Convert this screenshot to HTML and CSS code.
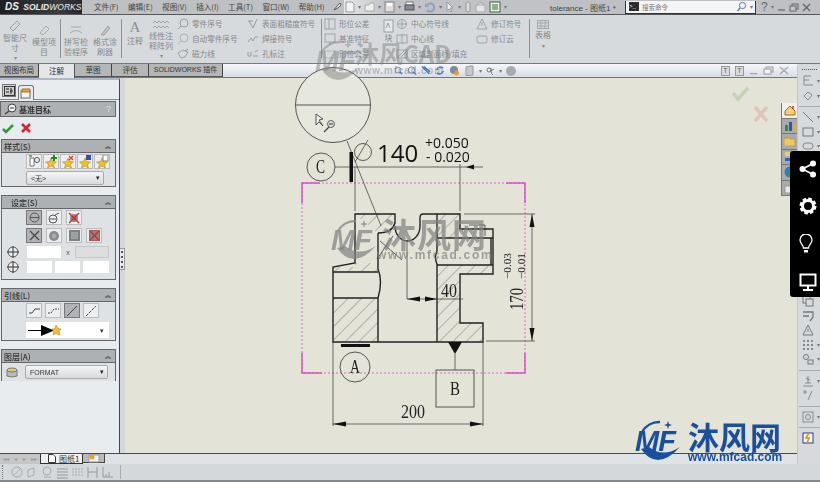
FILE: index.html
```html
<!DOCTYPE html>
<html>
<head>
    <meta charset="utf-8">
    <title>tolerance - 图纸1</title>
    <link rel="stylesheet" href="styles.css">
</head>
<body>
<div class="app">

    <!-- title bar -->
    <div class="topbar">
        <div class="logo"><span class="ds">DS</span> SOLID<span class="thin">WORKS</span></div>
        <div class="menu">
            <span>文件(F)</span><span>编辑(E)</span><span>视图(V)</span><span>插入(I)</span><span>工具(T)</span><span>窗口(W)</span><span>帮助(H)</span>
        </div>
        <svg class="pin" width="10" height="12" viewBox="0 0 10 12"><path d="M2 9 L5 5 L8 2 L9 4 L6 7Z" fill="#eee" stroke="#555"/></svg>
        <div class="quick">
            <svg width="10" height="12" viewBox="0 0 10 12"><path d="M1 1H7L9 3V11H1Z" fill="#f4f4f4" stroke="#999"/></svg><i>▾</i>
            <svg width="11" height="12" viewBox="0 0 11 12"><path d="M1 4H5L6 2H10V10H1Z" fill="#eee" stroke="#aaa"/></svg><i>▾</i>
            <svg width="11" height="12" viewBox="0 0 11 12"><rect x="1" y="1" width="9" height="10" fill="#ddd" stroke="#888"/><rect x="3" y="2" width="5" height="3" fill="#fff"/></svg><i>▾</i>
            <svg width="11" height="12" viewBox="0 0 11 12"><rect x="2" y="1" width="7" height="3" fill="#fff" stroke="#777"/><rect x="1" y="4" width="9" height="5" fill="#889" stroke="#555"/></svg><i>▾</i>
            <svg width="12" height="12" viewBox="0 0 12 12"><path d="M3 4 A4 4 0 1 1 3 9" fill="none" stroke="#8ea1bd" stroke-width="2"/><path d="M1 2V6H5Z" fill="#8ea1bd"/></svg><i>▾</i>
            <svg width="10" height="12" viewBox="0 0 10 12"><path d="M2 1V10L4 8L6 11L7 10L5 7H8Z" fill="#eee" stroke="#999"/></svg><i>▾</i>
            <svg width="8" height="12" viewBox="0 0 8 12"><rect x="2" y="1" width="4" height="10" rx="2" fill="#ddd" stroke="#999"/></svg>
            <svg width="11" height="12" viewBox="0 0 11 12"><path d="M1 4H10V11H1Z M3 4V2H8V4" fill="#e4e4e4" stroke="#aaa"/></svg>
            <svg width="12" height="12" viewBox="0 0 12 12"><rect x="1" y="1" width="10" height="10" fill="#e8f0e8" stroke="#3a6a3a"/><path d="M3 4H9M3 6H9M3 8H9" stroke="#3a6a3a"/></svg><i>▾</i>
        </div>
        <div class="doc-title">tolerance - 图纸1 *</div>
        <div class="search">
            <span class="prompt">&gt;_</span>
            <span class="search-text">搜索命令</span>
            <svg width="11" height="11" viewBox="0 0 11 11"><circle cx="6.5" cy="4.5" r="3.2" fill="#eef" stroke="#6a7f99"/><path d="M4 7L1.5 10" stroke="#6a7f99" stroke-width="1.4"/></svg>
            <i>▾</i>
        </div>
        <div class="win-btns">
            <span class="help">?</span><i>▾</i>
            <svg width="9" height="9" viewBox="0 0 9 9"><path d="M1 7H8" stroke="#666" stroke-width="1.2"/></svg>
            <svg width="10" height="9" viewBox="0 0 10 9"><rect x="3" y="1" width="6" height="5" fill="none" stroke="#666"/><rect x="1" y="3" width="6" height="5" fill="#c4c6c9" stroke="#666"/></svg>
            <svg width="9" height="9" viewBox="0 0 9 9"><path d="M1 1L8 8M8 1L1 8" stroke="#666" stroke-width="1.4"/></svg>
        </div>
    </div>

    <!-- ribbon -->
    <div class="ribbon">
        <div class="big w26">
            <svg width="14" height="12" viewBox="0 0 14 12"><path d="M2 8L9 1L12 4L5 11Z" fill="none" stroke="#9a9da0"/></svg>
            <span>智能尺寸</span><i>▾</i>
        </div>
        <div class="big w26 low">
            <svg width="14" height="12" viewBox="0 0 14 12"><path d="M3 9L9 2L12 5L6 11Z" fill="none" stroke="#a5a8ab"/></svg>
            <span>模型项目</span>
        </div>
        <div class="sep"></div>
        <div class="big w26 low">
            <svg width="16" height="12" viewBox="0 0 16 12"><path d="M2 9Q8 4 14 9" fill="none" stroke="#a5a8ab"/><path d="M3 3H13" stroke="#a5a8ab"/></svg>
            <span>拼写检验程序</span>
        </div>
        <div class="big w26 low">
            <svg width="14" height="12" viewBox="0 0 14 12"><path d="M3 11L10 2L12 4L6 11Z" fill="#c2c4c7" stroke="#a0a3a6"/></svg>
            <span>格式涂刷器</span>
        </div>
        <div class="sep"></div>
        <div class="big w18 note">
            <b class="bigA">A</b>
            <span>注释</span>
        </div>
        <div class="big w26">
            <svg width="18" height="10" viewBox="0 0 18 10"><path d="M1 3L3 1L5 3L7 1L9 3L11 1L13 3L15 1L17 3M1 8L3 6L5 8L7 6L9 8L11 6L13 8L15 6L17 8" fill="none" stroke="#a0a3a6"/></svg>
            <span>线性注释阵列</span><i>▾</i>
        </div>
        <div class="col w70">
            <div class="row"><svg width="12" height="12" viewBox="0 0 12 12"><circle cx="7" cy="5" r="4" fill="none" stroke="#9a9da0"/><path d="M4 8L1 11" stroke="#9a9da0"/></svg>零件序号</div>
            <div class="row"><svg width="12" height="12" viewBox="0 0 12 12"><circle cx="7" cy="5" r="4" fill="none" stroke="#b0b3b6"/><path d="M4 8L1 11" stroke="#b0b3b6"/></svg>自动零件序号</div>
            <div class="row"><svg width="12" height="12" viewBox="0 0 12 12"><path d="M1 5L6 2L11 4L8 9L4 10Z" fill="none" stroke="#a0a3a6"/><path d="M8 3L11 1" stroke="#c77" /></svg>磁力线</div>
        </div>
        <div class="col w74">
            <div class="row"><svg width="12" height="12" viewBox="0 0 12 12"><path d="M2 3L6 10L10 1" fill="none" stroke="#9a9da0"/><path d="M1 3H6" stroke="#9a9da0"/></svg>表面粗糙度符号</div>
            <div class="row"><svg width="12" height="12" viewBox="0 0 12 12"><path d="M1 9L4 5L6 8L8 4L11 4" fill="none" stroke="#9a9da0"/></svg>焊接符号</div>
            <div class="row"><svg width="12" height="12" viewBox="0 0 12 12"><path d="M1 4V8H4V4M6 8H11M8 4L11 2" fill="none" stroke="#9a9da0"/></svg>孔标注</div>
        </div>
        <div class="sep"></div>
        <div class="col w55">
            <div class="row"><svg width="12" height="12" viewBox="0 0 12 12"><rect x="1" y="1" width="10" height="10" fill="none" stroke="#a0a3a6"/><path d="M5 1V11" stroke="#a0a3a6"/></svg>形位公差</div>
            <div class="row"><svg width="12" height="12" viewBox="0 0 12 12"><rect x="1" y="1" width="10" height="8" fill="none" stroke="#a0a3a6"/><path d="M6 9V12" stroke="#a0a3a6"/></svg>基准特征</div>
            <div class="row"><svg width="12" height="12" viewBox="0 0 12 12"><rect x="1" y="3" width="10" height="7" fill="none" stroke="#b0b3b6"/></svg>形位公差</div>
        </div>
        <div class="block">
            <svg width="11" height="14" viewBox="0 0 11 14"><rect x="1" y="1" width="9" height="12" fill="#e6e8ea" stroke="#9a9da0"/><path d="M3 9L5 4L7 9" fill="none" stroke="#9a9da0"/></svg>
            <span>块</span>
        </div>
        <div class="col w80">
            <div class="row"><svg width="12" height="12" viewBox="0 0 12 12"><circle cx="6" cy="6" r="4.5" fill="none" stroke="#a0a3a6"/><path d="M6 2V10M2 6H10" stroke="#a0a3a6"/></svg>中心符号线</div>
            <div class="row"><svg width="12" height="12" viewBox="0 0 12 12"><rect x="1" y="2" width="10" height="8" fill="none" stroke="#a0a3a6"/><path d="M6 1V11" stroke="#a0a3a6"/></svg>中心线</div>
            <div class="row"><svg width="12" height="12" viewBox="0 0 12 12"><rect x="1" y="2" width="10" height="8" fill="none" stroke="#a0a3a6"/><path d="M2 9L8 3M5 9L10 4" stroke="#a0a3a6"/></svg>区域剖面线/填充</div>
        </div>
        <div class="col w53">
            <div class="row"><svg width="12" height="12" viewBox="0 0 12 12"><path d="M6 1L11 11H1Z" fill="none" stroke="#a0a3a6"/><path d="M6 4V8" stroke="#a0a3a6"/></svg>修订符号</div>
            <div class="row"><svg width="12" height="12" viewBox="0 0 12 12"><rect x="1" y="3" width="10" height="7" rx="2" fill="none" stroke="#a0a3a6"/></svg>修订云</div>
        </div>
        <div class="sep"></div>
        <div class="big w18 table">
            <svg width="12" height="9" viewBox="0 0 12 9"><rect x=".5" y=".5" width="11" height="8" fill="none" stroke="#a5a8ab"/><path d="M.5 3H11.5M.5 6H11.5M4 .5V8.5M8 .5V8.5" stroke="#a5a8ab"/></svg>
            <span>表格</span><i>▾</i>
        </div>
    </div>

    <div class="body">
        <div class="main">

            <!-- command tabs and heads-up toolbar -->
            <div class="tabrow">
                <span class="tab t39">视图布局</span>
                <span class="tab active">注解</span>
                <span class="tab t36">草图</span>
                <span class="tab t36">评估</span>
                <span class="tab t74">SOLIDWORKS 插件</span>
                <div class="headsup">
                    <svg width="9" height="11" viewBox="0 0 11 11"><circle cx="5" cy="5" r="3.5" fill="#e4ecf6" stroke="#6d7f96"/><path d="M7 7L10 10" stroke="#3d6fb5" stroke-width="1.4"/></svg>
                    <svg width="10" height="11" viewBox="0 0 11 11"><circle cx="5" cy="5" r="3.5" fill="#e4ecf6" stroke="#6d7f96"/><path d="M7 7L10 10" stroke="#3d6fb5" stroke-width="1.4"/></svg>
                    <svg width="10" height="11" viewBox="0 0 11 11"><path d="M1 1L9 9M3 1L10 7" stroke="#3a78c8" stroke-width="1.5"/></svg>
                    <svg width="10" height="11" viewBox="0 0 11 11"><path d="M2 5A4 4 0 0 1 9 3M9 6A4 4 0 0 1 2 8" fill="none" stroke="#3a78c8" stroke-width="1.6"/></svg>
                    <svg width="11" height="11" viewBox="0 0 11 11"><circle cx="5" cy="5" r="4" fill="#7d8a99"/><circle cx="7.5" cy="8" r="2.5" fill="#e0a030"/></svg>
                    <svg width="11" height="11" viewBox="0 0 11 11"><path d="M2 2L6 1H9V10L6 10.5H2Z" fill="#c6c9cc" stroke="#999"/></svg>
                    <i>▾</i>
                    <svg width="9" height="10" viewBox="0 0 9 10"><circle cx="3" cy="4" r="2" fill="none" stroke="#777"/><path d="M5 2L5 5Q5 8 7 9M5 5L8 3" fill="none" stroke="#777"/></svg>
                    <i>▾</i>
                    <span class="ball"></span>
                </div>
                <div class="docbtns">
                    <span class="dbox">T</span><span class="dbox">T</span>
                    <svg width="9" height="9" viewBox="0 0 10 9"><path d="M1 8H9" stroke="#999" stroke-width="1.2"/></svg>
                    <svg width="11" height="9" viewBox="0 0 11 9"><rect x="3" y="1" width="7" height="5" fill="none" stroke="#999"/><rect x="1" y="3" width="7" height="5" fill="#f2f3f5" stroke="#999"/></svg>
                    <svg width="10" height="9" viewBox="0 0 10 9"><path d="M1 1L9 8M9 1L1 8" stroke="#aaa" stroke-width="1.6"/></svg>
                </div>
            </div>

            <div class="work">
                <!-- property manager -->
                <div class="panel">
                    <div class="panel-tabs">
                        <span class="ptab"><svg width="11" height="10" viewBox="0 0 11 10"><rect x=".5" y=".5" width="10" height="9" fill="#ccc" stroke="#333"/><path d="M2 3H5M2 6H5M7 2V8M6 5H9" stroke="#222"/></svg></span>
                        <span class="ptab on"><svg width="12" height="11" viewBox="0 0 12 11"><rect x="1" y="3" width="9" height="7" fill="#f4f4f4" stroke="#666"/><path d="M2 1H10V4H2Z" fill="#e9a63a" stroke="#a87020"/></svg></span>
                    </div>
                    <div class="pm-title">
                        <svg width="13" height="12" viewBox="0 0 13 12"><circle cx="8" cy="5" r="4" fill="#eee" stroke="#444"/><path d="M5 8L1 11" stroke="#444" stroke-width="1.5"/><path d="M6 5H10" stroke="#444"/></svg>
                        <span>基准目标</span><em>?</em>
                    </div>
                    <div class="okrow">
                        <svg width="12" height="11" viewBox="0 0 12 11"><path d="M1 6L4 9L11 2" fill="none" stroke="#2f9a3a" stroke-width="2.6"/></svg>
                        <svg width="10" height="10" viewBox="0 0 10 10"><path d="M1 1L9 9M9 1L1 9" stroke="#d8262c" stroke-width="2.6"/></svg>
                    </div>

                    <div class="group g-style">
                        <div class="group-head"><span>样式(S)</span><b>︽</b></div>
                        <div class="group-body">
                            <div class="btns tight">
                                <span class="btn"><svg width="13" height="13" viewBox="0 0 13 13"><path d="M2 3H6V11H2Z" fill="#fff" stroke="#777"/><circle cx="9" cy="5" r="2.5" fill="none" stroke="#555"/><path d="M1 1H4" stroke="#2a9a40" stroke-width="1.4"/></svg></span>
                                <span class="btn"><svg width="13" height="13" viewBox="0 0 13 13"><use href="#star"/><path d="M9 0V6M6 3H12" stroke="#188a20" stroke-width="2"/></svg></span>
                                <span class="btn"><svg width="13" height="13" viewBox="0 0 13 13"><use href="#star"/><path d="M7 1L11 5M11 1L7 5" stroke="#d8403a" stroke-width="1.4"/></svg></span>
                                <span class="btn"><svg width="13" height="13" viewBox="0 0 13 13"><use href="#star"/><rect x="7" y="0" width="5" height="5" fill="#2a4fc0"/></svg></span>
                                <span class="btn"><svg width="13" height="13" viewBox="0 0 13 13"><use href="#star"/><rect x="7" y="0" width="5" height="6" fill="#fff" stroke="#888"/></svg></span>
                            </div>
                            <div class="select s78"><span>&lt;无&gt;</span><i>▾</i></div>
                        </div>
                    </div>

                    <div class="group g-set">
                        <div class="group-head center"><span>设定(S)</span><b>︽</b></div>
                        <div class="group-body">
                            <div class="btns">
                                <span class="btn sel"><svg width="11" height="11" viewBox="0 0 11 11"><circle cx="5.5" cy="5.5" r="4.5" fill="none" stroke="#555"/><path d="M1 5.5H10" stroke="#555"/></svg></span>
                                <span class="btn"><svg width="12" height="12" viewBox="0 0 12 12"><circle cx="5" cy="7" r="4" fill="none" stroke="#555"/><path d="M7 3L11 1M2 7H8" stroke="#555"/></svg></span>
                                <span class="btn"><svg width="12" height="12" viewBox="0 0 12 12"><circle cx="6" cy="6" r="4" fill="#888"/><path d="M1 1L11 11M11 1L1 11" stroke="#d8262c" stroke-width="1.4"/></svg></span>
                            </div>
                            <div class="btns">
                                <span class="btn sel"><svg width="11" height="11" viewBox="0 0 11 11"><path d="M1 1L10 10M10 1L1 10" stroke="#444" stroke-width="1.2"/></svg></span>
                                <span class="btn"><svg width="12" height="12" viewBox="0 0 12 12"><circle cx="6" cy="6" r="5" fill="#8a8a8a"/><circle cx="6" cy="6" r="2.5" fill="#aaa"/></svg></span>
                                <span class="btn"><svg width="11" height="11" viewBox="0 0 11 11"><rect width="11" height="11" fill="#808080"/><rect x="2" y="2" width="7" height="7" fill="#a0a0a0"/></svg></span>
                                <span class="btn"><svg width="11" height="11" viewBox="0 0 11 11"><rect width="11" height="11" fill="#888" stroke="#c33"/><path d="M1 1L10 10M10 1L1 10" stroke="#d8262c" stroke-width="1.4"/></svg></span>
                            </div>
                            <div class="fields">
                                <svg class="cross" width="12" height="12" viewBox="0 0 12 12"><circle cx="6" cy="6" r="5" fill="#eee" stroke="#555"/><path d="M6 0V12M0 6H12" stroke="#333"/></svg>
                                <span class="field f34"></span><span class="times">x</span><span class="field f34 off"></span>
                            </div>
                            <div class="fields">
                                <svg class="cross" width="12" height="12" viewBox="0 0 12 12"><circle cx="6" cy="6" r="5" fill="#eee" stroke="#555"/><path d="M6 0V12M0 6H12" stroke="#333"/></svg>
                                <span class="field f25"></span><span class="field f25"></span><span class="field f26"></span>
                            </div>
                        </div>
                    </div>

                    <div class="group g-lead">
                        <div class="group-head"><span>引线(L)</span><b>︽</b></div>
                        <div class="group-body">
                            <div class="btns gap3">
                                <span class="btn"><svg width="12" height="12" viewBox="0 0 12 12"><path d="M1 8H4L7 4H12" fill="none" stroke="#444"/></svg></span>
                                <span class="btn"><svg width="12" height="12" viewBox="0 0 12 12"><path d="M1 8H4L7 4H12" fill="none" stroke="#444" stroke-dasharray="2 1"/></svg></span>
                                <span class="btn sel"><svg width="12" height="12" viewBox="0 0 12 12"><path d="M1 11L11 1" stroke="#444"/></svg></span>
                                <span class="btn"><svg width="12" height="12" viewBox="0 0 12 12"><path d="M1 11L11 1" stroke="#444" stroke-dasharray="3 1"/></svg></span>
                            </div>
                            <div class="arrow-select">
                                <svg width="34" height="11" viewBox="0 0 34 11"><path d="M0 5.5H14" stroke="#000"/><path d="M13 0L26 5.5L13 11Z" fill="#000"/><path d="M28 0L30 3.5L33 4L31 6.5L32 10L28 8.5L25 10L25.500 6.500L24 4L27 3.500Z" fill="#f0c030" stroke="#a87a10" stroke-width=".5"/></svg>
                                <i>▾</i>
                            </div>
                        </div>
                    </div>

                    <div class="group g-layer">
                        <div class="group-head"><span>图层(A)</span><b>︽</b></div>
                        <div class="group-body row-body">
                            <svg width="12" height="11" viewBox="0 0 12 11"><path d="M1 3V9Q6 11 11 9V3" fill="#b8bcc0" stroke="#777"/><ellipse cx="6" cy="3" rx="5" ry="2" fill="#e8c860" stroke="#777"/></svg>
                            <div class="select s83"><span>FORMAT</span><i>▾</i></div>
                        </div>
                    </div>
                </div>

                <div class="grip">
                    <span></span><span></span><span></span><span></span>
                </div>

                <!-- drawing sheet -->
                <div class="canvas">
                    <svg class="sheet" width="672" height="376" viewBox="125 77 672 376">
                        <defs>
                            <pattern id="hatch" width="9.500" height="9.500" patternUnits="userSpaceOnUse" patternTransform="rotate(45)">
                                <path d="M0 0V9.500" stroke="#666" stroke-width=".8"/>
                            </pattern>
                            <g id="star"><path d="M6 3L7.500 6.500L11.500 7L8.500 9.500L9.500 13L6 11L2.500 13L3.500 9.500L.5 7L4.500 6.500Z" fill="#f0c030" stroke="#a87a10" stroke-width=".5"/></g>
                        </defs>

                        <!-- pale confirmation corner -->
                        <path d="M733 92L738 98L748 87" fill="none" stroke="#c4d4b4" stroke-width="3.500"/>
                        <path d="M755 106L767 120M767 106L755 120" stroke="#e2c4bc" stroke-width="3.500"/>

                        <!-- magnifier -->
                        <circle cx="333" cy="104" r="37.500" fill="#e6e7dd" stroke="#444" stroke-width=".9"/>
                        <path d="M296 104H370" stroke="#444" stroke-width=".9"/>
                        <path d="M316 113V124L319 121L323 125L319 119L323 118Z" fill="#eee" stroke="#333" stroke-width=".8"/>
                        <circle cx="331" cy="123" r="3.500" fill="#ddd" stroke="#444" stroke-width=".8"/>
                        <path d="M329 126L324 131" stroke="#444" stroke-width="1.200"/>
                        <path d="M329 123H333" stroke="#333"/>

                        <!-- selection frame -->
                        <rect x="302" y="182" width="223" height="190" fill="none" stroke="#d050c0" stroke-width=".8" stroke-dasharray="2 2"/>
                        <path d="M302 202V182H320M506 182H525V202M302 352V372H322M506 372H525V352" fill="none" stroke="#d850c8" stroke-width="1.500"/>

                        <!-- section hatching -->
                        <path d="M355 213H395V222L378 232V262L355 262V266H333V271H378V232Z" fill="url(#hatch)"/>
                        <path d="M333 297H378V341H333Z" fill="url(#hatch)"/>
                        <path d="M437 213H460V237H437Z" fill="url(#hatch)"/>
                        <path d="M437 264H493V273H460V322H483V341H437Z" fill="url(#hatch)"/>

                        <!-- part outline -->
                        <g fill="none" stroke="#222" stroke-width="1.400">
                            <path d="M378 232Q392 232 395 222V213H355V262L333 266V341H483V322H460V273H493V228H460V213H423Q420 213 420 217V225"/>
                            <path d="M378 232V268Q383 280 378 297V341"/>
                            <path d="M333 271H378M333 297H378"/>
                            <path d="M437 213V250Q434 257 437 263V341"/>
                            <path d="M437 237H493M437 264H493M491 237V264"/>
                            <path d="M395 225A12.500 15 0 0 0 420 225"/>
                        </g>
                        <g stroke="#222" stroke-width=".7" fill="none">
                            <path d="M380 240L402 259M393 235L377 258"/>
                            <path d="M469 224H485V235"/>
                        </g>

                        <!-- dimensions, thin lines -->
                        <g stroke="#333" stroke-width=".7" fill="none">
                            <path d="M347 140L381 225"/>
                            <path d="M355 166V210M460 163V210"/>
                            <path d="M335 166H350M350 166H483"/>
                            <path d="M407 241V298M407 298H463"/>
                            <path d="M464 213H535M486 340H535M532 213V340"/>
                            <path d="M333 341V425M483 341V425M333 423H483"/>
                            <path d="M355 161L368 139"/>
                            <path d="M455 353V369"/>
                        </g>
                        <g fill="#111">
                            <path d="M466 166L474 163.500V168.500Z"/>
                            <path d="M407 298L420 295.500V300.500Z"/>
                            <path d="M437 298L425 295.500V300.500Z"/>
                            <path d="M532 213L529.500 226H534.500Z"/>
                            <path d="M532 340L529.500 327H534.500Z"/>
                            <path d="M333 423L346 420.500V425.500Z"/>
                            <path d="M483 423L470 420.500V425.500Z"/>
                            <path d="M448 341H462L455 353Z"/>
                            <rect x="349.500" y="151" width="3.500" height="30"/>
                            <rect x="341" y="343" width="29" height="3"/>
                        </g>

                        <circle cx="363" cy="151" r="8.500" fill="none" stroke="#333" stroke-width=".8"/>
                        <circle cx="321" cy="166" r="14" fill="none" stroke="#333" stroke-width=".8"/>
                        <circle cx="355" cy="366" r="15" fill="none" stroke="#333" stroke-width=".8"/>
                        <rect x="436" y="369" width="38" height="37" fill="none" stroke="#333" stroke-width=".8"/>

                        <text class="dim big-dim" x="377" y="161">140</text>
                        <text class="dim tol" x="425" y="147">+0.050</text>
                        <text class="dim tol" x="426" y="161">- 0.020</text>
                        <text class="serif" x="316" y="172" font-size="19" textLength="9" lengthAdjust="spacingAndGlyphs">C</text>
                        <text class="serif" x="350" y="372" font-size="19" textLength="10" lengthAdjust="spacingAndGlyphs">A</text>
                        <text class="serif" x="450" y="394" font-size="19" textLength="10" lengthAdjust="spacingAndGlyphs">B</text>
                        <text class="serif" x="441" y="296" font-size="18" textLength="16" lengthAdjust="spacingAndGlyphs">40</text>
                        <text class="serif" x="401" y="417" font-size="19" textLength="24" lengthAdjust="spacingAndGlyphs">200</text>
                        <text class="serif" font-size="19" textLength="22" lengthAdjust="spacingAndGlyphs" transform="translate(523 309) rotate(-90)">170</text>
                        <text class="serif" font-size="11" textLength="26" lengthAdjust="spacingAndGlyphs" transform="translate(511 278) rotate(-90)">−0.03</text>
                        <text class="serif" font-size="11" textLength="26" lengthAdjust="spacingAndGlyphs" transform="translate(525 278) rotate(-90)">−0.01</text>
                    </svg>

                    <!-- task pane tabs -->
                    <div class="taskpane">
                        <span class="tp first"><svg width="12" height="11" viewBox="0 0 12 11"><path d="M1 6L6 1L11 6V10H1Z" fill="#f0d070" stroke="#a07020"/><path d="M9 1V4" stroke="#c33" stroke-width="1.500"/></svg></span>
                        <span class="tp"><svg width="12" height="11" viewBox="0 0 12 11"><rect x="1" y="5" width="3" height="6" fill="#3a8a3a"/><rect x="5" y="2" width="3" height="9" fill="#2a5ab0"/><rect x="9" y="4" width="3" height="7" fill="#e0b030"/></svg></span>
                        <span class="tp"><svg width="12" height="10" viewBox="0 0 12 10"><path d="M0 2H5L6 3H11V10H0Z" fill="#f0c860" stroke="#b08a30" stroke-width=".6"/></svg></span>
                        <span class="tp"><svg width="12" height="12" viewBox="0 0 12 12"><rect x="1" y="1" width="6" height="4" fill="#e8d060"/><rect x="1" y="7" width="9" height="3" fill="#3060c0"/></svg></span>
                        <span class="tp"><svg width="12" height="12" viewBox="0 0 12 12"><circle cx="6" cy="6" r="5.500" fill="#2a80c0"/><path d="M2 9Q6 4 11 8V10H2Z" fill="#2a9a40"/></svg></span>
                        <span class="tp"><svg width="12" height="12" viewBox="0 0 12 12"><rect x="1" y="4" width="9" height="7" fill="#e8e8e8" stroke="#999"/></svg></span>
                    </div>
                </div>
            </div>

            <div class="sheet-tabs">
                <div class="nav"><i>◂◂</i><i>◂</i><i>▸</i><i>▸▸</i></div>
                <span class="sheet-tab"><svg width="8" height="9" viewBox="0 0 8 9"><path d="M.5 .5H5L7.500 3V8.500H.5Z" fill="#fff" stroke="#333"/></svg>图纸1</span>
                <span class="sheet-add"><svg width="12" height="9" viewBox="0 0 12 9"><rect x="1" y="1" width="10" height="7" fill="#f4f4f0" stroke="#999"/><circle cx="4" cy="3" r="2.500" fill="#e8a030"/></svg></span>
            </div>
        </div>

        <!-- right toolbar strip -->
        <div class="strip">
            <div class="grip-h"></div>
            <div class="s-row"><svg width="12" height="12" viewBox="0 0 12 12"><path d="M2 1V10H11M2 1H9M2 5H7" fill="none" stroke="#888"/></svg><i>▾</i></div>
            <div class="s-row"><svg width="12" height="12" viewBox="0 0 12 12"><path d="M2 6L6 2L10 5L6 10Z" fill="none" stroke="#888"/></svg><i>▾</i></div>
            <div class="s-sep"></div>
            <div class="s-row"><svg width="12" height="12" viewBox="0 0 12 12"><path d="M1 1L11 11" stroke="#777"/></svg><i>▾</i></div>
            <div class="s-row"><svg width="12" height="12" viewBox="0 0 12 12"><rect x="1" y="2" width="10" height="8" fill="none" stroke="#777"/></svg><i>▾</i></div>
            <div class="s-row"><svg width="12" height="12" viewBox="0 0 12 12"><rect x="1" y="3" width="10" height="6" rx="3" fill="none" stroke="#888"/></svg><i>▾</i></div>
            <div class="s-hidden"></div>
            <div class="s-row"><svg width="12" height="12" viewBox="0 0 12 12"><path d="M1 3H11M1 6H8M1 9H11M6 1V11" stroke="#888"/></svg><i>▾</i></div>
            <div class="s-row"><svg width="12" height="12" viewBox="0 0 12 12"><rect x="1" y="1" width="7" height="7" fill="none" stroke="#777"/><rect x="4" y="4" width="7" height="7" fill="#d8dbde" stroke="#777"/></svg></div>
            <div class="s-row"><svg width="12" height="12" viewBox="0 0 12 12"><path d="M1 2H11V7L8 11M1 6H7" fill="none" stroke="#777" stroke-width="1.300"/></svg></div>
            <div class="s-row"><svg width="12" height="12" viewBox="0 0 12 12"><path d="M6 1L11 11H1Z" fill="none" stroke="#777"/><path d="M6 5V8" stroke="#777"/></svg></div>
            <div class="s-row"><svg width="12" height="12" viewBox="0 0 12 12"><path d="M1 2H3M5 2H7M9 2H11M1 6H3M5 6H7M9 6H11M1 10H3M5 10H7M9 10H11" stroke="#888" stroke-width="2"/></svg><i>▾</i></div>
            <div class="s-row"><svg width="12" height="12" viewBox="0 0 12 12"><circle cx="4" cy="4" r="2.500" fill="none" stroke="#777"/><rect x="6" y="7" width="5" height="4" fill="none" stroke="#777"/></svg><i>▾</i></div>
            <div class="s-sep"></div>
            <div class="s-row"><svg width="12" height="12" viewBox="0 0 12 12"><path d="M1 11H11M3 8H9M6 1V8M4 3L8 5" fill="none" stroke="#888"/></svg><i>▾</i></div>
            <div class="s-row"><svg width="12" height="12" viewBox="0 0 12 12"><path d="M1 3H5M3 1V5M6 11L10 2" fill="none" stroke="#888"/></svg></div>
            <div class="s-sep"></div>
            <div class="s-row"><svg width="12" height="12" viewBox="0 0 12 12"><rect x="1" y="1" width="10" height="10" fill="none" stroke="#888"/><circle cx="6" cy="6" r="2.500" fill="none" stroke="#888"/></svg><i>▾</i></div>
            <div class="s-sep"></div>
            <div class="s-row"><svg width="12" height="12" viewBox="0 0 12 12"><rect x="1" y="1" width="10" height="10" fill="#f4f4f4" stroke="#2a3a9a"/><path d="M7 1L4 6H7L5 11" fill="none" stroke="#e09020" stroke-width="1.600"/></svg></div>
        </div>
    </div>

    <!-- bottom toolbar -->
    <div class="bottombar">
        <div class="grip-v"></div>
        <svg width="13" height="13" viewBox="0 0 13 13"><circle cx="6" cy="6" r="5" fill="none" stroke="#aaa"/><path d="M3 9L9 3" stroke="#aaa"/></svg>
        <svg width="13" height="13" viewBox="0 0 13 13"><path d="M2 4L8 2V9L2 11Z" fill="none" stroke="#aaa"/></svg>
        <svg width="13" height="13" viewBox="0 0 13 13"><circle cx="6" cy="5" r="4" fill="none" stroke="#aaa"/><path d="M3 11H10" stroke="#aaa"/></svg>
        <svg width="13" height="13" viewBox="0 0 13 13"><path d="M1 3H12M1 6H12M1 9H12M1 12H12" stroke="#999"/></svg>
        <svg width="13" height="13" viewBox="0 0 13 13"><path d="M1 3H12M1 6H12M1 9H12" stroke="#aaa" stroke-dasharray="2 1"/></svg>
        <svg width="13" height="13" viewBox="0 0 13 13"><path d="M2 1V12M11 1V12M2 6H11" stroke="#999"/></svg>
        <svg width="13" height="13" viewBox="0 0 13 13"><path d="M2 1V11H12M5 8V11M8 6V11" fill="none" stroke="#999"/></svg>
        <div class="bb-sep"></div>
    </div>

    <!-- overlays -->
    <div class="share">
        <svg width="18" height="18" viewBox="0 0 18 18"><circle cx="14" cy="3.500" r="3" fill="#fff"/><circle cx="14" cy="14.500" r="3" fill="#fff"/><circle cx="3.500" cy="9" r="3" fill="#fff"/><path d="M14 3.500L3.500 9L14 14.500" fill="none" stroke="#fff" stroke-width="1.600"/></svg>
        <svg width="18" height="18" viewBox="0 0 18 18"><circle cx="9" cy="9" r="5.500" fill="none" stroke="#fff" stroke-width="3"/><circle cx="9" cy="9" r="7" fill="none" stroke="#fff" stroke-width="3" stroke-dasharray="3.500 2"/></svg>
        <svg width="14" height="20" viewBox="0 0 14 20"><path d="M4.500 14C4.500 11 1 9.500 1 6A6 6 0 0 1 13 6C13 9.500 9.500 11 9.500 14Z" fill="none" stroke="#fff" stroke-width="1.300"/><rect x="5" y="16" width="4" height="2.500" fill="#fff"/></svg>
        <svg width="18" height="18" viewBox="0 0 18 18"><path d="M1.500 1.500H16.500V12.500H1.500Z" fill="none" stroke="#fff" stroke-width="2"/><path d="M9 13V16M4 17H14" stroke="#fff" stroke-width="2"/></svg>
    </div>

    <div class="wm wm-top">
        <div class="mark">
            <svg width="48" height="42" viewBox="0 0 48 42"><use href="#swoosh"/></svg>
            <span>MF</span>
        </div>
        <div class="wm-text">
            <div class="wm-cn">沐风CAD</div>
            <div class="wm-url">www.mfcad.com</div>
        </div>
    </div>
    <div class="wm wm-mid">
        <div class="mark">
            <svg width="48" height="42" viewBox="0 0 48 42"><use href="#swoosh"/></svg>
            <span>MF</span>
        </div>
        <div class="wm-text">
            <div class="wm-cn">沐风网</div>
            <div class="wm-url">www.mfcad.com</div>
        </div>
    </div>
    <div class="brand">
        <div class="mark">
            <svg width="48" height="42" viewBox="0 0 48 42">
                <g id="swoosh">
                    <path d="M7 12A20 20 0 0 1 25 2" fill="none" stroke="currentColor" stroke-width="2.500"/>
                    <path d="M6 29Q22 52 45 27Q28 38 14 27Z" fill="currentColor"/>
                    <path d="M33 1L34 4L37 5L34 6L33 9L32 6L29 5L32 4Z" fill="currentColor"/>
                </g>
            </svg>
            <span>MF</span>
        </div>
        <div class="brand-text">
            <div class="brand-cn">沐风网</div>
            <div class="brand-url">www.mfcad.com</div>
        </div>
    </div>
</div>
</body>
</html>
```

FILE: styles.css
```css
* {
    box-sizing: border-box;
}

html, body {
    margin: 0;
    padding: 0;
}

body {
    width: 820px;
    height: 482px;
    overflow: hidden;
    background: #d5d8da;
    font-family: "Noto Sans CJK SC", "Liberation Sans", sans-serif;
    font-size: 8px;
}

i {
    font-style: normal;
}

svg {
    display: block;
    flex: none;
}

.app {
    position: relative;
    width: 820px;
    height: 482px;
    display: flex;
    flex-direction: column;
    overflow: hidden;
    filter: blur(0.5px);
}

/* title bar */
.topbar {
    height: 15px;
    flex: none;
    display: flex;
    align-items: center;
    background: #bec0c3;
    border-bottom: 1px solid #55585b;
    color: #444;
}

.logo {
    width: 82px;
    height: 14px;
    background: linear-gradient(90deg, #1d1f22, #3a3d40 70%, #26282b);
    color: #eee;
    font: italic bold 8.5px "Liberation Sans", sans-serif;
    line-height: 14px;
    padding-left: 5px;
    white-space: nowrap;
}

.logo .ds {
    font-size: 10px;
    margin-right: 2px;
}

.logo .thin {
    font-weight: normal;
}

.menu {
    display: flex;
    gap: 9.4px;
    margin-left: 12px;
    width: 238px;
    font-size: 7.6px;
    white-space: nowrap;
    line-height: 14px;
}

.quick {
    width: 206px;
    margin-left: 2px;
    height: 14px;
    display: flex;
    align-items: center;
    gap: 3px;
    padding-left: 1px;
    background: linear-gradient(90deg, #e6e8ea, #c0c2c5 20%);
    color: #777;
}

.quick i, .search i, .win-btns i, .headsup i, .s-row i {
    font-size: 6px;
    line-height: 8px;
    color: #777;
}

.doc-title {
    width: 75px;
    font: 8px "Liberation Sans", "Noto Sans CJK SC", sans-serif;
    color: #444;
    white-space: nowrap;
}

.search {
    width: 131px;
    height: 13px;
    display: flex;
    align-items: center;
    gap: 3px;
    background: #f4f5f6;
    border: 1px solid #333;
    border-top: 0;
    padding: 0 2px 0 3px;
    color: #777;
}

.prompt {
    width: 10px;
    height: 9px;
    background: #2c2c2c;
    color: #fff;
    font: 6px/9px "Liberation Mono", monospace;
}

.search-text {
    flex: 1;
    font-size: 6.5px;
}

.win-btns {
    display: flex;
    align-items: center;
    gap: 3px;
    margin-left: 5px;
    color: #666;
}

.help {
    font: 12px/12px "Liberation Sans", sans-serif;
}

/* ribbon */
.ribbon {
    height: 49px;
    flex: none;
    display: flex;
    background: #d7dadc;
    color: #85888b;
    border-bottom: 1px solid #77797b;
    padding: 2px 0 1px 2px;
    line-height: 9.5px;
}

.big {
    display: flex;
    flex-direction: column;
    align-items: center;
    text-align: center;
    gap: 1px;
    padding-top: 3px;
    margin-right: 3px;
    overflow: hidden;
}

.big.low {
    padding-top: 7px;
}

.big span {
    font-size: 8px;
}

.big i {
    font-size: 6px;
    color: #888;
}

.w18 {
    width: 18px;
}

.w26 {
    width: 26px;
}

.note {
    margin-left: 2px;
    margin-right: 4px;
}

.table {
    margin-left: 2px;
}

.bigA {
    font: 15px/15px "Liberation Serif", serif;
    color: #8d9093;
}

.sep {
    width: 1px;
    margin: 2px 2px 4px 0;
    background: #8f9295;
}

.col {
    display: flex;
    flex-direction: column;
    gap: 1px;
}

.w55 {
    width: 55px;
    margin-right: 2px;
}

.w70 {
    width: 70px;
}

.w74 {
    width: 74px;
}

.w80 {
    width: 80px;
}

.w53 {
    width: 53px;
}

.row {
    height: 14px;
    display: flex;
    align-items: center;
    gap: 3px;
    white-space: nowrap;
    font-size: 7.6px;
}

.block {
    width: 15px;
    display: flex;
    flex-direction: column;
    align-items: center;
    gap: 1px;
    padding-top: 2px;
    line-height: 8px;
}

/* main column */
.body {
    flex: 1;
    display: flex;
    min-height: 0;
}

.main {
    flex: 1;
    min-width: 0;
    display: flex;
    flex-direction: column;
}

.tabrow {
    height: 14px;
    flex: none;
    display: flex;
    align-items: stretch;
    background: linear-gradient(#f6f7f9, #d8dde6);
    border-bottom: 1px solid #777;
}

.tab {
    height: 13px;
    line-height: 12px;
    text-align: center;
    background: #b4b6b8;
    border-right: 1px solid #444;
    border-bottom: 1px solid #555;
    color: #333;
    font-size: 7.6px;
    white-space: nowrap;
}

.t39 {
    width: 39px;
}

.t36 {
    width: 37px;
}

.t74 {
    width: 74px;
    font-family: "Liberation Sans", "Noto Sans CJK SC", sans-serif;
    font-size: 7px;
}

.tab.active {
    width: 36px;
    height: 14px;
    background: #e4e6e8;
    border-bottom: 0;
    border-right: 1px solid #555;
    line-height: 13px;
}

.headsup {
    margin-left: 171px;
    display: flex;
    align-items: center;
    gap: 4px;
    width: 135px;
}

.ball {
    width: 10px;
    height: 10px;
    border-radius: 50%;
    background: #a8acb0;
}

.docbtns {
    margin-left: auto;
    margin-right: 8px;
    display: flex;
    align-items: center;
    gap: 5px;
}

.dbox {
    width: 9px;
    height: 10px;
    border: 1px solid #999;
    background: #d8dadc;
    font: 7px/8px "Liberation Sans", sans-serif;
    text-align: center;
    color: #666;
}

.work {
    flex: 1;
    min-height: 0;
    display: flex;
}

/* property manager */
.panel {
    width: 120px;
    flex: none;
    background: #e9ecef;
    border-right: 1px solid #454545;
    border-top: 2px solid #aeb8c8;
    display: flex;
    flex-direction: column;
    color: #333;
}

.panel-tabs {
    height: 20px;
    display: flex;
    align-items: flex-end;
    gap: 2px;
    padding: 0 0 2px 2px;
    border-bottom: 1px solid #888;
}

.ptab {
    width: 14px;
    height: 13px;
    display: flex;
    align-items: center;
    justify-content: center;
    background: #d2d4d6;
    border: 1px solid #777;
}

.ptab.on {
    background: #e9ecef;
    height: 15px;
    width: 16px;
    margin-bottom: -3px;
    border-bottom: 0;
    border-radius: 3px 3px 0 0;
}

.pm-title {
    margin: 1px 3px 0 0;
    height: 16px;
    display: flex;
    align-items: center;
    gap: 2px;
    padding: 0 4px 0 3px;
    background: #aeb1b4;
    border: 1px solid #666;
    font-size: 8px;
    font-weight: bold;
    color: #333;
}

.pm-title span {
    flex: 1;
}

.pm-title em {
    font: normal 9px "Liberation Sans", sans-serif;
    color: #ddd;
}

.okrow {
    height: 22px;
    display: flex;
    align-items: center;
    gap: 7px;
    padding-left: 2px;
}

.group {
    margin: 0 3px 8px 1px;
    border: 1px solid #666;
    flex: none;
    display: flex;
    flex-direction: column;
}

.group-head {
    height: 13px;
    flex: none;
    display: flex;
    align-items: center;
    justify-content: space-between;
    padding: 0 4px 0 2px;
    background: #aeb1b4;
    border-bottom: 1px solid #666;
    color: #333;
    font-size: 8px;
    font-weight: 500;
}

.group-head.center {
    padding-left: 9px;
}

.group-head b {
    font-size: 6px;
    line-height: 8px;
    color: #444;
}

.group-body {
    flex: 1;
    display: flex;
    flex-direction: column;
    align-items: flex-start;
    gap: 2px;
    padding: 1px 0 1px 24px;
    background: #dfe2e5;
}

.row-body {
    flex-direction: row;
    align-items: center;
    gap: 7px;
    padding: 2px 0 2px 4px;
}

.g-style {
    height: 48px;
}

.g-set {
    height: 85px;
}

.g-set .group-body {
    gap: 3px;
}

.g-lead {
    height: 53px;
}

.g-layer {
    height: 32px;
}

.btns {
    display: flex;
    gap: 4px;
}

.btns.tight {
    gap: 1px;
}

.btns.gap3 {
    gap: 3px;
    margin-bottom: 2px;
}

.btn {
    width: 16px;
    height: 15px;
    display: flex;
    align-items: center;
    justify-content: center;
    background: #eceef0;
    border: 1px solid #bbb;
}

.btn.sel {
    background: #b0b2b5;
    border-color: #777;
}

.select {
    height: 14px;
    display: flex;
    align-items: center;
    justify-content: space-between;
    padding: 0 3px 0 4px;
    background: linear-gradient(#f4f5f6, #d8dadc);
    border: 1px solid #aaa;
    border-radius: 2px;
    font: 7px "Liberation Sans", "Noto Sans CJK SC", sans-serif;
    color: #333;
}

.select i {
    font-size: 7px;
    color: #222;
}

.s78 {
    width: 78px;
}

.s83 {
    width: 83px;
}

.fields {
    display: flex;
    align-items: center;
    gap: 3px;
    margin-left: -19px;
    height: 12px;
}

.cross {
    margin-right: 5px;
}

.field {
    height: 12px;
    background: #fff;
}

.f34 {
    width: 34px;
}

.f25 {
    width: 25px;
}

.f26 {
    width: 26px;
}

.field.off {
    background: #dcdee0;
    border: 1px solid #c4c6c8;
}

.times {
    font: 7px "Liberation Sans", sans-serif;
    width: 8px;
    text-align: center;
    color: #555;
}

.arrow-select {
    width: 83px;
    height: 16px;
    display: flex;
    align-items: center;
    justify-content: space-between;
    background: #fff;
    padding: 0 5px 0 2px;
}

.arrow-select i {
    font-size: 7px;
}

.grip {
    width: 5px;
    flex: none;
    margin: 170px 0 183px 0;
    display: flex;
    flex-direction: column;
    justify-content: space-around;
    align-items: center;
    background: #e9ecef;
    border: 1px solid #999;
    border-left: 0;
}

.grip span {
    width: 2px;
    height: 2px;
    background: #555;
}

/* drawing sheet */
.canvas {
    position: relative;
    flex: 1;
    min-width: 0;
    background: #e3e3d8;
}

.sheet {
    position: absolute;
    left: 0;
    top: 0;
    overflow: visible;
}

.dim {
    font-family: "Open Sans", "Liberation Sans", sans-serif;
    fill: #111;
}

.big-dim {
    font-size: 24px;
}

.tol {
    font-size: 14px;
}

.serif {
    font-family: "Liberation Serif", serif;
    fill: #222;
}

.taskpane {
    position: absolute;
    right: 0;
    top: 25px;
    width: 16px;
    display: flex;
    flex-direction: column;
    border-left: 1px solid #777;
}

.tp {
    height: 15.500px;
    display: flex;
    align-items: center;
    justify-content: center;
    background: #a8aaac;
    border-bottom: 1px solid #777;
}

.tp.first {
    background: #eef0f2;
}

/* sheet tabs */
.sheet-tabs {
    height: 11px;
    flex: none;
    display: flex;
    align-items: flex-start;
    background: #dfe3e6;
    border-top: 1px solid #4a4a4a;
    position: relative;
}

.nav {
    width: 40px;
    height: 10px;
    display: flex;
    justify-content: space-around;
    background: #c4c6c8;
    color: #999;
    font-size: 6px;
    line-height: 9px;
}

.sheet-tab {
    width: 43px;
    height: 10px;
    display: flex;
    align-items: center;
    gap: 3px;
    padding-left: 7px;
    background: #eef0f2;
    color: #333;
    border-right: 1px solid #333;
    border-left: 1px solid #333;
    border-bottom: 1px solid #333;
}

.sheet-add {
    width: 22px;
    height: 9px;
    display: flex;
    justify-content: center;
    background: #b8babc;
    border-right: 1px solid #444;
    border-bottom: 1px solid #444;
}

/* right strip */
.strip {
    width: 23px;
    flex: none;
    margin-top: 2px;
    background: #d7dadc;
    padding: 3px 0 0 4px;
    display: flex;
    flex-direction: column;
    border-left: 1px solid #c4c6c8;
}

.grip-h {
    height: 1px;
    margin: 0 3px 4px 0;
    border-top: 1px dotted #555;
}

.s-row {
    height: 14.500px;
    flex: none;
    display: flex;
    align-items: center;
    gap: 3px;
}

.s-sep {
    height: 1px;
    flex: none;
    margin: 3px 0 3px -3px;
    background: #a8abae;
}

.s-hidden {
    height: 126px;
    flex: none;
}

/* bottom toolbar */
.bottombar {
    height: 18px;
    flex: none;
    display: flex;
    align-items: center;
    gap: 2px;
    background: #d5d8da;
    border-bottom: 2px solid #85888b;
}

.grip-v {
    width: 1px;
    height: 14px;
    margin: 0 6px 0 2px;
    border-left: 1px dotted #777;
}

.bb-sep {
    width: 1px;
    height: 14px;
    margin-left: 4px;
    background: #aaa;
}

/* overlays */
.share {
    position: absolute;
    left: 790px;
    top: 151px;
    width: 30px;
    height: 146px;
    padding: 9px 0 6px 9px;
    background: #000;
    border-radius: 3px 0 0 3px;
    display: flex;
    flex-direction: column;
    justify-content: space-between;
    align-items: flex-start;
}

/* logo mark shared by the watermarks and the blue brand */
.mark {
    position: relative;
    width: 48px;
    height: 42px;
    flex: none;
}

.mark svg {
    position: absolute;
    left: 0;
    top: 0;
}

.mark span {
    position: absolute;
    left: 0;
    top: 8px;
    font: italic bold 29px/26px "Liberation Sans", sans-serif;
    letter-spacing: -1px;
}

.wm {
    position: absolute;
    display: flex;
    color: rgba(130, 130, 130, 0.72);
    font-weight: bold;
    white-space: nowrap;
}

.wm-cn {
    font-size: 34px;
    line-height: 30px;
    letter-spacing: 1px;
}

.wm-url {
    font: bold 12px/10px "Liberation Sans", sans-serif;
    letter-spacing: 1.7px;
    margin: 1px 0 0 -5px;
}

.wm-mid {
    left: 331px;
    top: 219px;
}

.wm-mid .wm-text {
    margin-left: 3px;
}

.wm-top {
    left: 315px;
    top: 40px;
    color: rgba(130, 130, 130, 0.5);
}

.wm-top .mark {
    width: 40px;
}

.wm-top .wm-cn {
    font-size: 24px;
    line-height: 25px;
    letter-spacing: 0;
}

.wm-top .wm-url {
    font-size: 10px;
    letter-spacing: 0.8px;
    margin-left: 0;
}

.brand {
    position: absolute;
    left: 635px;
    top: 420px;
    height: 43px;
    display: flex;
    color: #1a4fa0;
}

.brand-text {
    margin-left: 5px;
}

.brand-cn {
    font-size: 31px;
    line-height: 32px;
    font-weight: bold;
}

.brand-url {
    font: bold 12px/11px "Liberation Sans", sans-serif;
    white-space: nowrap;
}
```
